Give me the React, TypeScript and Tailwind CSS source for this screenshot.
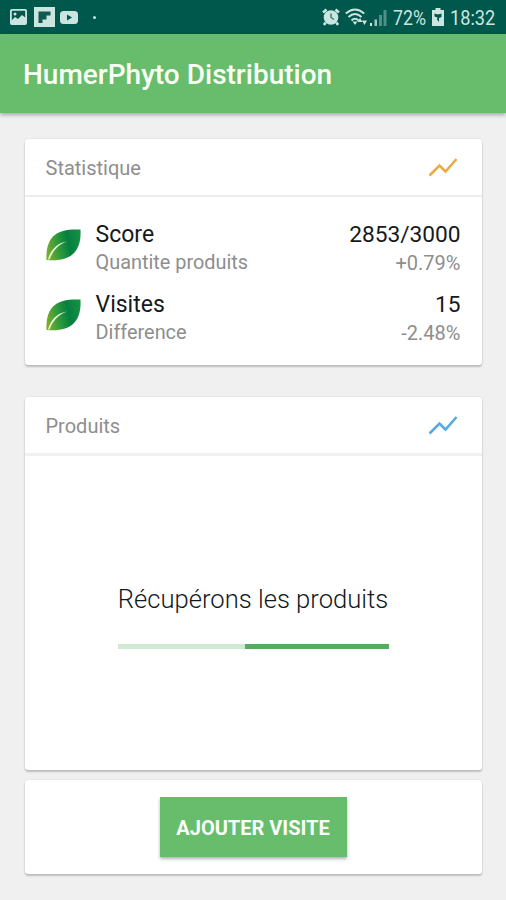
import type { ReactNode } from "react";

const stats = [
  { title: "Score", subtitle: "Quantite produits", value: "2853/3000", change: "+0.79%" },
  { title: "Visites", subtitle: "Difference", value: "15", change: "-2.48%" },
];

const Leaf = () => (
  <svg className="w-[35px] h-[32px]" viewBox="0 0 35 32">
    <defs>
      <linearGradient id="leaf" x1="0" y1="0.6" x2="1" y2="0.4">
        <stop offset="0" stopColor="#79ad2b" />
        <stop offset="0.35" stopColor="#2f9a3c" />
        <stop offset="0.65" stopColor="#04803f" />
        <stop offset="1" stopColor="#168f45" />
      </linearGradient>
    </defs>
    <path
      d="M34.500 .5C35 10 33.500 18 28 24C22.500 30 13 32 .5 31C0 21.500 1.500 13.500 7 7.500C13 1.500 22.500 0 34.500 .5Z"
      fill="url(#leaf)"
    />
    <path d="M2 30.500C4 22.500 10 14 21 12.500C12.500 15.500 7 21.500 3.500 30.500Z" fill="#e4f5dc" />
  </svg>
);

const TrendIcon = ({ className }: { className: string }) => (
  <svg className={`w-[30px] h-[20px] ${className}`} viewBox="0 0 30 20" fill="none">
    <path d="M1.500 17.500L11.500 7.500L17.500 13.500L28.500 1" stroke="currentColor" strokeWidth="2.600" />
  </svg>
);

const StatusBar = () => (
  <div className="flex items-center h-[34px] pl-[10px] bg-[#00574b] text-[#cbe5e1]">
    <svg className="w-[17px] h-[16px]" viewBox="0 0 17 16">
      <rect x="0.900" y="0.900" width="15.200" height="14.200" rx="1" fill="none" stroke="currentColor" strokeWidth="1.800" />
      <circle cx="5" cy="5" r="1.500" fill="currentColor" />
      <path d="M1 12L5 8L8 10L12 6L16 9V15H1Z" fill="currentColor" />
    </svg>
    <svg className="w-[21px] h-[20px] ml-[7px]" viewBox="0 0 21 20">
      <rect width="21" height="20" fill="currentColor" />
      <path d="M4.500 4.500H16.500V8.500H12.500V12.500H8.500V16H4.500Z" fill="#12594e" />
    </svg>
    <svg className="w-[18px] h-[13px] ml-[5px]" viewBox="0 0 18 13">
      <rect width="18" height="13" rx="3.500" fill="currentColor" />
      <path d="M7 3.500L12 6.500L7 9.500Z" fill="#00574b" />
    </svg>
    <span className="w-[3px] h-[3px] ml-[15px] rounded-full bg-[#cbe5e1]" />
    <div className="flex items-center ml-auto pr-[11px]">
      <svg className="w-[18px] h-[18px]" viewBox="0 0 18 18">
        <circle cx="9" cy="9.500" r="7.300" fill="currentColor" />
        <path d="M1 4.500L4.500 1.500M17 4.500L13.500 1.500M3.500 14.500L2 17M14.500 14.500L16 17" stroke="currentColor" strokeWidth="2.600" />
        <path d="M9 5.500V9.500L12 11.500" fill="none" stroke="#38786f" strokeWidth="1.400" />
      </svg>
      <svg className="w-[24px] h-[18px] ml-[5px]" viewBox="0 0 24 18" fill="none" stroke="currentColor" strokeWidth="1.900">
        <path d="M.8 5.500Q10 -2.500 19.200 5.500M3.500 9Q10 3 16.500 9M6.500 12.500Q10 9 13.500 12.500" />
        <path d="M7.500 13.500L10 17L12.500 13.500Z" fill="currentColor" stroke="none" />
        <path d="M12.500 14L15 10L17.500 14ZM17 12.500L19.500 17L22 12.500Z" fill="currentColor" stroke="none" />
      </svg>
      <svg className="w-[17px] h-[17px] ml-[1px]" viewBox="0 0 17 17" fill="currentColor">
        <rect y="14" width="2" height="3" />
        <rect x="4.500" y="10.500" width="2.500" height="6.500" opacity="0.800" />
        <rect x="9" y="6" width="3" height="11" opacity="0.400" />
        <rect x="13.500" y="1" width="3" height="16" opacity="0.400" />
      </svg>
      <span className="w-[33px] ml-[6px] mt-[1px] text-[20px] leading-none whitespace-nowrap origin-left scale-x-[0.890]">72%</span>
      <svg className="w-[12px] h-[18px] ml-[6px]" viewBox="0 0 12 18">
        <path d="M3.500 0H8.500V2H12V18H0V2H3.500Z" fill="currentColor" />
        <path d="M2.500 5.500L6 6.500L9.500 5.500V9L7 10V14L5 11.500L5.500 9.500L2.500 8.500Z" fill="#00574b" />
      </svg>
      <span className="w-[45px] ml-[6px] mt-[1px] text-[20px] leading-none whitespace-nowrap origin-left scale-x-[0.910]">18:32</span>
    </div>
  </div>
);

const Card = ({ className, children }: { className: string; children: ReactNode }) => (
  <section className={`mx-auto w-[457px] rounded-[3px] bg-white shadow-[0_2px_2px_rgba(0,0,0,0.2),0_0_2px_rgba(0,0,0,0.12)] ${className}`}>
    {children}
  </section>
);

const App = () => {
  return (
    <div className="w-[506px] h-[900px] overflow-hidden bg-[#f0f0f0] font-['Roboto',sans-serif]">
      <StatusBar />
      <header className="flex items-center h-[79px] pt-[3px] pl-[23px] bg-[#67bd6c] shadow-[0_2px_4px_rgba(0,0,0,0.3)]">
        <h1 className="text-[28px] font-medium text-[#fafff5] whitespace-nowrap">HumerPhyto Distribution</h1>
      </header>

      <Card className="mt-[26px] h-[226px]">
        <div className="flex items-center justify-between h-[58px] pt-[2px] pl-[21px] pr-[24px] border-b-2 border-[#ededed]">
          <h2 className="text-[20px] text-[#8e8e8e]">Statistique</h2>
          <TrendIcon className="text-[#e9ac42]" />
        </div>
        <div className="pt-[23px] pl-[21px] pr-[21px]">
          {stats.map((stat) => (
            <div key={stat.title} className="flex h-[70px]">
              <div className="pt-[9px]">
                <Leaf />
              </div>
              <div className="ml-[15px]">
                <p className="text-[23px] leading-[30px] text-[#15191b]">{stat.title}</p>
                <p className="text-[19.900px] leading-[26px] text-[#8e8e8e]">{stat.subtitle}</p>
              </div>
              <div className="ml-auto text-right">
                <p className="text-[22.700px] leading-[30px] text-[#15191b]">{stat.value}</p>
                <p className="text-[20px] leading-[26px] text-[#8e8e8e]">{stat.change}</p>
              </div>
            </div>
          ))}
        </div>
      </Card>

      <Card className="mt-[32px] h-[373px]">
        <div className="flex items-center justify-between h-[59px] pt-[2px] pl-[21px] pr-[24px] border-b-3 border-[#f1f1f1]">
          <h2 className="text-[20px] text-[#8e8e8e]">Produits</h2>
          <TrendIcon className="text-[#56aade]" />
        </div>
        <div className="flex flex-col items-center pt-[127px]">
          <p className="text-[25.600px] leading-[32px] font-light text-[#101a1d] whitespace-nowrap">Récupérons les produits</p>
          <div className="flex w-[271px] h-[5px] mt-[29px] bg-[#d0e9d0]">
            <div className="w-[144px] h-full ml-auto bg-[#58ac5d]" />
          </div>
        </div>
      </Card>

      <Card className="flex items-center justify-center mt-[10px] h-[94px]">
        <button className="w-[187px] h-[60px] pt-[2px] bg-[#67bd6c] text-[20px] font-bold text-[#fafffa] whitespace-nowrap shadow-[0_2px_3px_rgba(0,0,0,0.3)]">
          AJOUTER VISITE
        </button>
      </Card>
    </div>
  );
};

export default App;
